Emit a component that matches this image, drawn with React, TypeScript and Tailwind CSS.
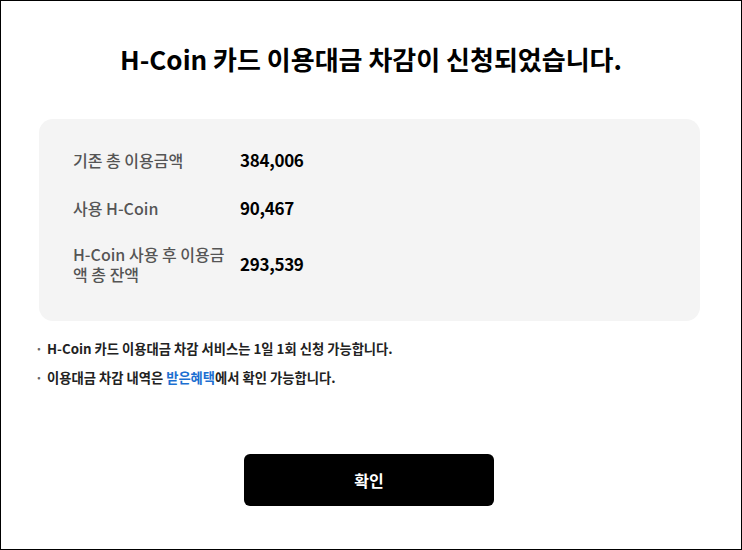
import React from 'react';

const rows = [
  { label: '기존 총 이용금액', value: '384,006' },
  { label: '사용 H-Coin', value: '90,467' },
  { label: 'H-Coin 사용 후 이용금액 총 잔액', value: '293,539' },
];

export default function App() {
  return (
    <div
      className="w-[742px] h-[550px] border border-black bg-white flex flex-col overflow-hidden"
      style={{ fontFamily: '"Noto Sans CJK KR", "Noto Sans", sans-serif' }}
    >
      {/* 타이틀 */}
      <h1 className="mt-[41px] h-[34px] text-center text-[26px] leading-[34px] font-bold text-black">
        H-Coin 카드 이용대금 차감이 신청되었습니다.
      </h1>

      {/* 금액 박스 */}
      <div className="mt-[43px] ml-[38px] w-[661px] h-[202px] rounded-[14px] bg-[#f4f4f4] pl-[34px] pt-[29px] flex flex-col gap-[24px]">
        {rows.map((r) => (
          <div key={r.value} className="flex items-center">
            <div className="w-[167px] pr-[6px] text-[16px] leading-[20px] font-medium text-[#555555]">{r.label}</div>
            <div className="text-[17px] leading-[24px] font-bold text-black tracking-[-0.3px]">{r.value}</div>
          </div>
        ))}
      </div>

      {/* 안내 */}
      <ul className="mt-[18px] ml-[34px] flex flex-col gap-[9px] text-[13.3px] leading-[20px] font-semibold text-[#222222]">
        <li className="flex">
          <span className="w-[12px] text-[#666666]">·</span>
          <span>H-Coin 카드 이용대금 차감 서비스는 1일 1회 신청 가능합니다.</span>
        </li>
        <li className="flex">
          <span className="w-[12px] text-[#666666]">·</span>
          <span>
            이용대금 차감 내역은 <span className="text-[#1c6fd1]">받은혜택</span>에서 확인 가능합니다.
          </span>
        </li>
      </ul>

      <button className="mt-[66px] ml-[243px] w-[250px] h-[52px] rounded-[6px] bg-black text-white text-[16px] font-semibold">
        확인
      </button>
    </div>
  );
}
